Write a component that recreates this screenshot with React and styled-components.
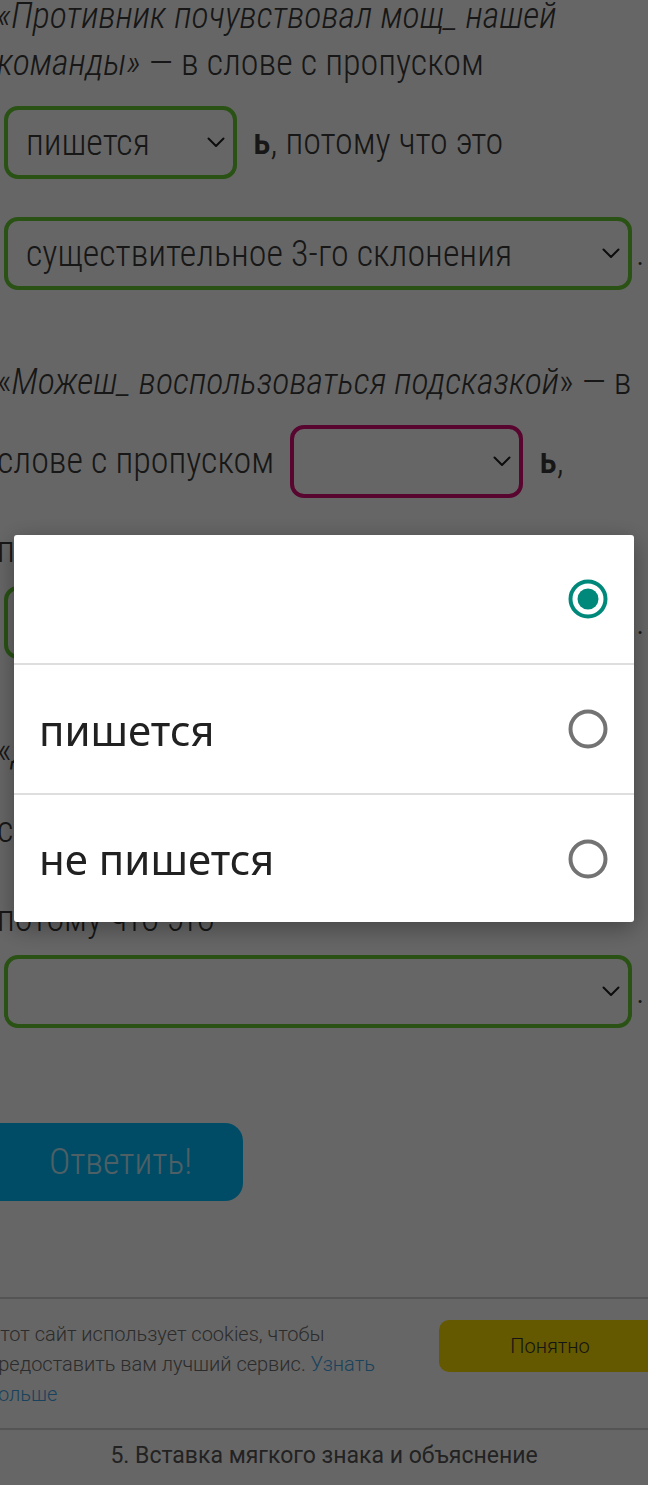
import React from "react";
import styled, { createGlobalStyle } from "styled-components";

const GlobalStyle = createGlobalStyle`
  html, body { margin: 0; padding: 0; background: #ffffff; }
  body { overflow: hidden; }
`;

const Page = styled.div`
  width: 648px;
  height: 1485px;
  overflow: hidden;
  display: flex;
  flex-direction: column;
  background: #ffffff;
`;

const Content = styled.div`
  margin: -7px 0 0 -3px;
  font-family: Roboto, "Noto Sans", sans-serif;
  font-stretch: 75%;
  font-weight: 300;
  font-size: 36px;
  color: #3a3a3a;
`;

const Paragraph = styled.div`
  display: flex;
  flex-direction: column;
  & + & { margin-top: 50px; }
`;

const Line = styled.div`
  display: flex;
  align-items: center;
  min-height: 47px;
  line-height: 47px;
  white-space: pre;
  margin-top: ${p => p.$mt || 0}px;
`;

const Em = styled.i`
  font-style: italic;
`;

const Soft = styled.b`
  font-weight: 500;
`;

const SelectBox = styled.div`
  box-sizing: border-box;
  width: ${p => p.$width}px;
  height: 73px;
  margin: 19px ${p => (p.$wide ? 4 : 16)}px 19px ${p => (p.$start ? 7 : 16)}px;
  border: 4px solid ${p => (p.$state === "wrong" ? "#dd1177" : "#66cc33")};
  border-radius: 14px;
  padding: 0 8px 0 18px;
  display: flex;
  align-items: center;
  justify-content: space-between;
  flex-shrink: 0;
  line-height: 1;
`;

const Chevron = () => (
  <svg width="18" height="11" viewBox="0 0 18 11" fill="none">
    <path d="M1.5 1.5 L9 9 L16.5 1.5" stroke="#1e1e1e" strokeWidth="2" strokeLinecap="round" strokeLinejoin="round" />
  </svg>
);

const Select = ({ value, width, wide, start, state }) => (
  <SelectBox $width={width} $wide={wide} $start={start} $state={state}>
    <span>{value}</span>
    <Chevron />
  </SelectBox>
);

const SubmitButton = styled.button`
  margin: 76px 0 0 -16px;
  width: 259px;
  height: 78px;
  border: none;
  border-radius: 18px;
  background: #00bfff;
  color: #c4eefc;
  font-family: Roboto, sans-serif;
  font-stretch: 75%;
  font-weight: 300;
  font-size: 36px;
  padding: 0 0 0 14px;
  align-self: flex-start;
`;

const Bottom = styled.div`
  margin-top: auto;
  font-family: Roboto, "Noto Sans", sans-serif;
`;

const CookieBar = styled.div`
  border-top: 2px solid #d2d2d2;
  border-bottom: 2px solid #d2d2d2;
  height: 133px;
  box-sizing: border-box;
  display: flex;
  align-items: flex-start;
  padding-top: 20px;
`;

const CookieText = styled.p`
  margin: 0 0 0 -13px;
  width: 410px;
  flex-shrink: 0;
  font-size: 20px;
  line-height: 30px;
  font-weight: 300;
  color: #6e6e6e;
`;

const Link = styled.a`
  color: #3fa6e6;
  text-decoration: none;
`;

const OkButton = styled.button`
  margin: 1px 0 0 42px;
  flex-shrink: 0;
  width: 222px;
  height: 52px;
  border: none;
  border-radius: 10px;
  background: #fadc00;
  color: #333333;
  font-family: Roboto, sans-serif;
  font-size: 20px;
  font-weight: 300;
`;

const Footer = styled.div`
  height: 55px;
  display: flex;
  align-items: center;
  justify-content: center;
  font-size: 23px;
  color: #555555;
  padding-bottom: 4px;
  box-sizing: border-box;
`;

const Overlay = styled.div`
  position: fixed;
  inset: 0;
  background: rgba(0, 0, 0, 0.6);
  display: flex;
  flex-direction: column;
  align-items: center;
  padding-top: 535px;
  box-sizing: border-box;
`;

const Dialog = styled.div`
  width: 620px;
  background: #ffffff;
  border-radius: 3px;
  box-shadow: 0 6px 24px rgba(0, 0, 0, 0.35);
  overflow: hidden;
`;

const Option = styled.div`
  height: ${p => (p.$last ? 127 : 128)}px;
  display: flex;
  align-items: center;
  justify-content: space-between;
  padding: 0 25px 0 25px;
  font-family: "Noto Sans", sans-serif;
  font-size: 42px;
  color: #212121;
  & + & { border-top: 2px solid #dedede; }
`;

const Radio = ({ checked }) => (
  <svg width="42" height="42" viewBox="0 0 42 42">
    <circle cx="21" cy="21" r="17.5" fill="none" stroke={checked ? "#00897b" : "#737373"} strokeWidth="4" />
    {checked && <circle cx="21" cy="21" r="10.5" fill="#00897b" />}
  </svg>
);

const options = [
  { label: "", checked: true },
  { label: "пишется", checked: false },
  { label: "не пишется", checked: false },
];

export default function App() {
  return (
    <>
      <GlobalStyle />
      <Page>
        <Content>
          <Paragraph>
            <Line><Em>«Противник почувствовал мощ_ нашей</Em></Line>
            <Line><Em>команды»</Em> — в слове с пропуском</Line>
            <Line>
              <Select value="пишется" width={233} start />
              <span><Soft>ь</Soft>, потому что это</span>
            </Line>
            <Line>
              <Select value="существительное 3-го склонения" width={628} start wide />
              <span>.</span>
            </Line>
          </Paragraph>
          <Paragraph>
            <Line>«<Em>Можеш_ воспользоваться подсказкой</Em>» — в</Line>
            <Line>
              <span>слове с пропуском</span>
              <Select value="" width={233} state="wrong" />
              <span><Soft>ь</Soft>,</span>
            </Line>
            <Line $mt={10}>потому что это</Line>
            <Line $mt={-7}>
              <Select value="" width={628} start wide />
              <span>.</span>
            </Line>
          </Paragraph>
          <Paragraph>
            <Line>«<Em>Дач_ у нас нет</Em>» — в</Line>
            <Line>
              <span>слове с пропуском</span>
              <Select value="" width={233} />
              <span><Soft>ь</Soft>,</span>
            </Line>
            <Line $mt={10}>потому что это</Line>
            <Line $mt={-7}>
              <Select value="" width={628} start wide />
              <span>.</span>
            </Line>
          </Paragraph>
        </Content>
        <SubmitButton>Ответить!</SubmitButton>
        <Bottom>
          <CookieBar>
            <CookieText>
              Этот сайт использует cookies, чтобы предоставить вам лучший сервис.{" "}
              <Link href="#">Узнать больше</Link>
            </CookieText>
            <OkButton>Понятно</OkButton>
          </CookieBar>
          <Footer>5. Вставка мягкого знака и объяснение</Footer>
        </Bottom>
      </Page>
      <Overlay>
        <Dialog>
          {options.map((o, i) => (
            <Option key={i} $last={i === options.length - 1}>
              <span>{o.label}</span>
              <Radio checked={o.checked} />
            </Option>
          ))}
        </Dialog>
      </Overlay>
    </>
  );
}
